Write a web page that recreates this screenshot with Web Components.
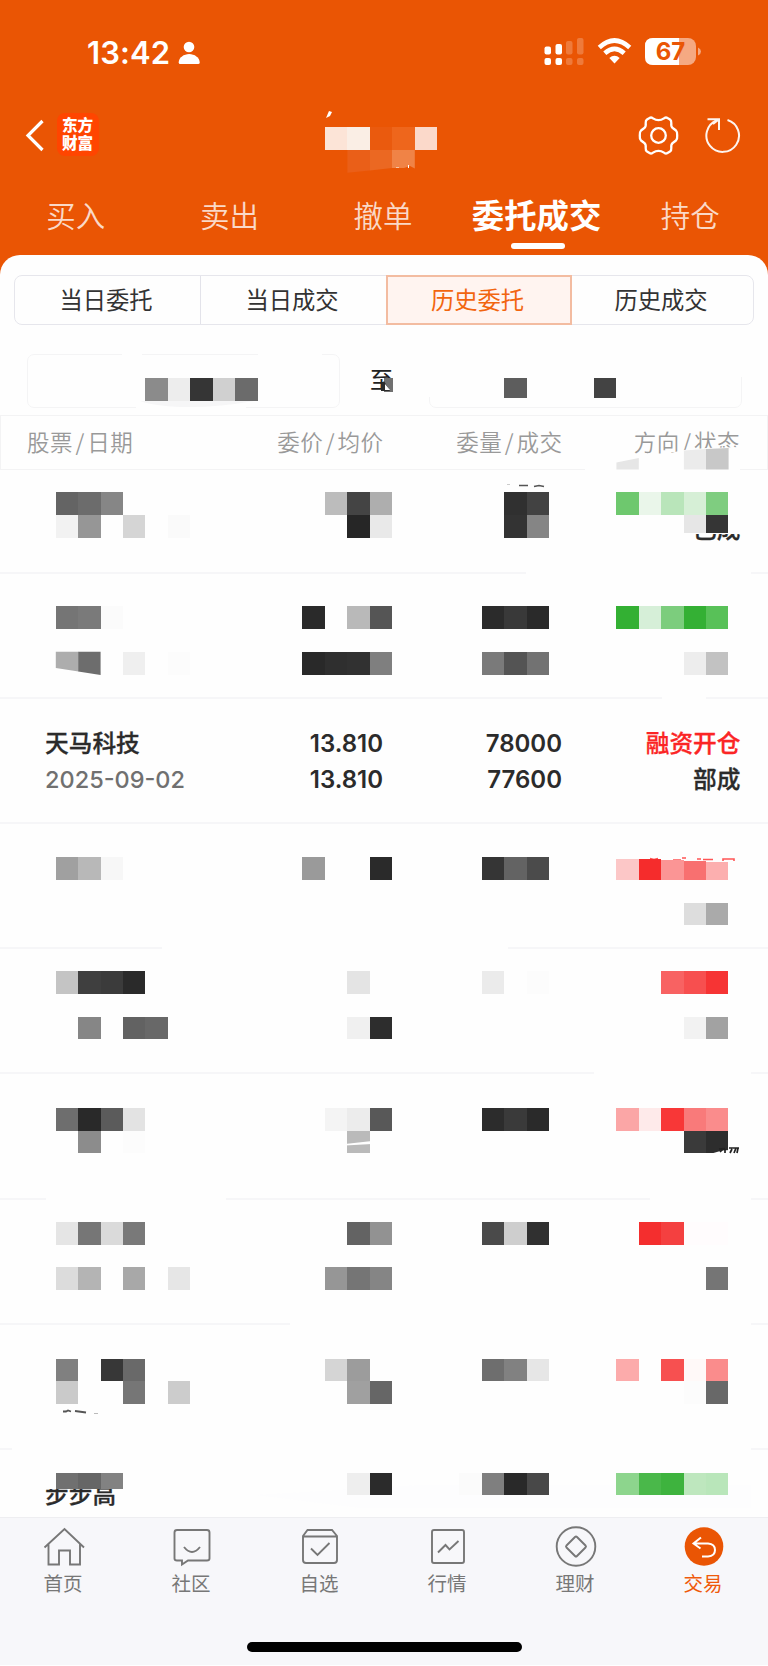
<!DOCTYPE html>
<html lang="zh-CN">
<head>
<meta charset="utf-8">
<title>历史委托</title>
<style>
html,body{margin:0;padding:0;background:#fefefe}
body{width:768px;height:1666px;overflow:hidden;font-family:Inter,"Noto Sans CJK SC",sans-serif}
</style>
</head>
<body>
<trade-app></trade-app>
<script>
const define=(name,html,after)=>customElements.define(name,class extends HTMLElement{
  connectedCallback(){
    if(this.shadowRoot)return;
    this.attachShadow({mode:'open'}).innerHTML=typeof html==='function'?html(this):html;
    if(after)after(this);
  }
});

define('phone-status',`<style>
:host{display:flex;height:104px;color:#fff;padding:0 65px 0 87px;box-sizing:border-box;justify-content:space-between}
.l,.r{display:flex;align-items:flex-start}
.t{font:600 31px/38px Inter,sans-serif;margin-top:34px;letter-spacing:.1px;width:91px;white-space:nowrap}
svg{display:block}
.r svg{margin-top:36px}
.bat{position:relative;margin-left:13px}
.bat b{position:absolute;left:0;top:37px;width:51px;text-align:center;font:700 24px/29px Inter,sans-serif;color:#ea5504}
</style>
<div class="l"><div class="t">13:42</div>
<svg style="margin-top:40px" width="23" height="25" viewBox="0 0 23 25" fill="#fff"><circle cx="11" cy="7" r="5.3"/><path d="M.7 22.5C.7 17.5 6 14 11.200 14s10.500 3.500 10.500 8.500q0 1.500-1.500 1.500H2.200Q.7 24 .7 22.500Z"/></svg></div>
<div class="r">
<svg width="40" height="30" viewBox="0 0 40 30" fill="#fff"><rect x=".5" y="10.500" width="6.500" height="8" rx="2"/><rect x=".5" y="22" width="6.500" height="7" rx="2"/><rect x="11.500" y="8" width="6.500" height="10.500" rx="2"/><rect x="11.500" y="22" width="6.500" height="7" rx="2"/><g opacity=".22"><rect x="22" y="5" width="6.500" height="13.500" rx="2"/><rect x="22" y="22" width="6.500" height="7" rx="2"/><rect x="33" y="2" width="6.500" height="16.500" rx="2"/><rect x="33" y="22" width="6.500" height="7" rx="2"/></g></svg>
<svg style="margin-left:13px" width="35" height="30" viewBox="0 0 35 30" fill="none" stroke="#fff" stroke-width="4.600"><path d="M2.300 11.500Q17.500-2.500 32.700 11.500M7.800 17.200Q17.500 8.500 27.200 17.200"/><path d="M17.500 27.500 12.300 22Q17.500 17.600 22.700 22Z" fill="#fff" stroke="none"/></svg>
<div class="bat"><svg width="58" height="30" viewBox="0 0 58 30"><rect x="0" y="2" width="51" height="27" rx="8" fill="#f5a982"/><path d="M8 2H34V29H8Q0 29 0 21V10Q0 2 8 2Z" fill="#fff"/><path d="M53 11.500Q56 13 56 15.500T53 19.500Z" fill="#f5a982"/></svg><b>67</b></div>
</div>`);

define('nav-header',`<style>
:host{display:flex;height:86px;align-items:flex-start;padding:0 25px;color:#fff;box-sizing:border-box}
.logo{width:42px;height:43px;border-radius:8px;background:#ff4500;margin:9px 0 0 13px;box-sizing:border-box;padding:3px 0 0 5px;white-space:nowrap;font:900 15.600px/17.800px "Noto Sans CJK SC",sans-serif}
.space{flex:1}
svg{display:block}
</style>
<svg style="margin-top:15px" width="19" height="33" viewBox="0 0 19 33" fill="none" stroke="#fff" stroke-width="3.200"><path d="M17.500 2 3 16.500 17.500 31"/></svg>
<div class="logo">东方<br>财富</div><div class="space"></div>
<svg style="margin-top:11px" width="41" height="41" viewBox="-20.500 -20.500 41 41" fill="none" stroke="#fff" stroke-width="2.300" stroke-linejoin="round"><circle r="7.300"/><path d="M-5-16.800Q-7-18.800-9-17.500L-11.500-16Q-13-15-12.800-12.500Q-12.300-8.500-14.500-7.200L-17.500-5Q-19-3.500-18.700 0Q-19 3.500-17.500 5L-14.500 7.200Q-12.300 8.500-12.800 12.500Q-13 15-11.500 16L-9 17.500Q-7 18.800-5 16.800Q-3 15.300 0 15.300Q3 15.300 5 16.800Q7 18.800 9 17.500L11.500 16Q13 15 12.800 12.500Q12.300 8.500 14.500 7.200L17.500 5Q19 3.500 18.700 0Q19-3.500 17.500-5L14.500-7.200Q12.300-8.500 12.800-12.500Q13-15 11.500-16L9-17.500Q7-18.800 5-16.800Q3-15.300 0-15.300Q-3-15.300-5-16.800Z"/></svg>
<svg style="margin:12px 1px 0 26px" width="37" height="39" viewBox="0 0 37 39" fill="none" stroke="#fff" stroke-width="2" opacity=".94"><path d="M22.500 4A16.300 16.300 0 1 1 11.500 4.500M2.500 3.200H14V14M13.500 3.700 8 8"/></svg>`);

define('trade-tab',e=>`<style>
:host{display:flex;flex-direction:column;align-items:center;flex:1;font:350 29.500px/44px "Noto Sans CJK SC",sans-serif;color:rgba(255,255,255,.78);white-space:nowrap}
span{position:relative;left:-1px;top:1.500px}
:host([active]){color:#fff;font-weight:600;font-size:32.400px}
i{display:none;width:54px;height:6px;border-radius:3px;background:#fff;margin-top:9px}
:host([active]) i{display:block}
</style><span><slot></slot></span><i></i>`);

define('seg-item',`<style>
:host{display:flex;align-items:center;justify-content:center;border-right:1.500px solid #e3e3ea;font:400 23.300px/30px "Noto Sans CJK SC",sans-serif;color:#333;box-sizing:border-box;padding:0 3px 2px 0}
:host(:last-child){border-right:0}
:host([active]){background:#fff4f0;color:#f2650f;border:2px solid #f3bca1;margin:-1px 0 -1px -1px}
</style><slot></slot>`);
define('seg-bar',`<style>
:host{display:grid;grid-template-columns:186px 186px 185px 1fr;height:50px;width:740px;margin:20px 0 0 14px;box-sizing:border-box;border:1.500px solid #e6e6ec;border-radius:8px}
</style><slot></slot>`);

define('date-range',`<style>
:host{display:flex;justify-content:space-between;align-items:center;height:55px;margin:28px 26px 0 27px}
i{width:313px;height:54px;box-sizing:border-box;border:1.500px solid #f4f4f5;border-radius:7px}
span{font:400 23px/54px "Noto Sans CJK SC",sans-serif;color:#222;margin:-5px 0 0 -6px}
</style><i></i><span>至</span><i></i>`);

define('list-head',`<style>
:host{display:grid;grid-template-columns:218.500px 138px 179px 177.500px;height:55px;margin-top:7px;box-sizing:border-box;padding-left:26px;border:1.500px solid #f3f3f4;color:#999;font:350 22.500px/50px "Noto Sans CJK SC",sans-serif;letter-spacing:.5px;text-align:right;white-space:nowrap}
b{font-weight:inherit;margin:0 2.500px}
.first{text-align:left}
</style><span class="first">股票<b>/</b>日期</span><span>委价<b>/</b>均价</span><span>委量<b>/</b>成交</span><span>方向<b>/</b>状态</span>`);

define('order-row',`<style>
:host{display:grid;grid-template-columns:200px 138px 179px 178.500px;grid-template-rows:36px 36px;height:125.200px;box-sizing:border-box;padding:27px 0 0 45px;border-bottom:2px solid #f6f6f8;color:#2b2b2b;font:600 24px/36px Inter,"Noto Sans CJK SC",sans-serif;text-align:right;white-space:nowrap}
::slotted([cn]){font:500 23.700px/32.500px "Noto Sans CJK SC",sans-serif;-webkit-text-stroke:.3px currentColor}
::slotted([left]){text-align:left}
::slotted([day]){color:#707070;font-weight:500;font-size:23.500px}
::slotted([buy]){color:#fb2525}
</style><slot></slot>`);

define('redaction-layer',`<style>:host{position:absolute;left:0;top:0;width:768px;height:1517px;pointer-events:none}svg{display:block}rect{shape-rendering:crispEdges}</style><svg width="768" height="1517" viewBox="0 0 768 1517"></svg>`,el=>{
  const X=k=>55.8+22.42*k,Y=j=>492.200+22.800*j;
  const runs=[
   [-5,'4:8b8b8b ededed 353535 d0d0d0 6b6b6b'],
   [0,'0:646464 6c6c6c 868686|12:bcbcbc 444444 aeaeae|20:303030 424242|25:6ec86e eaf6ea b9e5ba d6efd6 7fcd80'],
   [1,'0:f2f2f2 969696|3:d5d5d5|5:fafafa|13:262626 e9e9e9|20:333333 858585'],
   [5,'0:757575 7a7a7a fbfbfb|11:2a2a2a|13:b9b9b9 555555|19:2b2b2b 393939 2a2a2a|25:33b033 d6efd8 7ccd7d 34b034 58c158'],
   [7,'3:efefef|5:fcfcfc|11:292929 2f2f2f 313131 7f7f7f|19:7a7a7a 545454 727272|28:ededed c2c2c2'],
   [16,'0:a0a0a0 b8b8b8 f7f7f7|11:9a9a9a|14:2a2a2a|19:353535 636363 4b4b4b'],
   [18,'28:dddddd aaaaaa'],
   [21,'0:c4c4c4 3f3f3f 3b3b3b 2a2a2a|13:e4e4e4|19:ebebeb|21:fcfcfc|27:f86262 f74f4f f63434'],
   [23,'1:868686|3:626262 686868|13:f0f0f0 2d2d2d|28:f2f2f2 a2a2a2'],
   [27,'0:6e6e6e 292929 5b5b5b e3e3e3|12:f4f4f4 ececec 585858|19:2c2c2c 3a3a3a 2a2a2a|25:fba6a6 feeaea f83737 f97a7a fa8c8c'],
   [28,'1:8c8c8c|3:fcfcfc|13:bababa|28:3a3a3a 2d2d2d'],
   [32,'0:e5e5e5 767676 dadada 797979|13:636363 929292|19:4a4a4a cecece 303030|26:f42e2e f44040 fffcfd fffcfd'],
   [34,'0:dcdcdc b4b4b4|3:a8a8a8|5:e6e6e6|12:969696 757575 858585|29:757575'],
   [38,'0:808080|2:373737 696969|12:d5d5d5 9c9c9c|19:6e6e6e 818181 e6e6e6|25:fcabab|27:f75050 fff9f8 fa8c8c'],
   [39,'0:cacaca|3:767676|5:cccccc|13:a0a0a0 666666|28:fcfcfc 686868'],
   [43,'13:eeeeee 2b2b2b|18:fbfbfb 7f7f7f 292929 484848|25:8dd58d 4ab84a 3eb33e bee7be b9e6ba']];
  const W='#fefefe';
  const rect=(x,y,w,h,c)=>`<rect x="${x}" y="${y}" width="${w}" height="${h}" fill="${c}"/>`;
  const poly=(p,c)=>`<polygon points="${p}" fill="${c}"/>`;
  let s='';
  /* cleared areas */
  s+=rect(122,352,20,4,W)+rect(258,352,64,4,W)+rect(425,350,330,27,W)+rect(425,377,10,20,W)+rect(136,402,110,6,W);
  s+=`<path d="M140 401H254Q220 407 190 407Q158 407 140 401Z" fill="#f6f6f7"/>`;
  s+=poly('670,453 684,450 706,448 740,447 740,470 585,472 585,466 618,462',W);
  s+=rect(690,510,52,23.500,W)+rect(526,571,225,4,W)+rect(662,696,44,4,W)+rect(162,946,346,4,W)+rect(594,1071,157,4,W)+rect(46,1196,180,4,W)+rect(650,1196,101,4,W)+rect(290,1321,461,4,W)+rect(12,1446,739,4,W)+rect(42,1478,80,11,W);
  s+=poly('255,1495 420,1485 751,1485 751,1508 360,1508','#fdfdfe');
  for(const [j,line] of runs)for(const run of line.split('|')){
    const [k,cs]=run.split(':');
    cs.split(' ').forEach((c,i)=>s+=rect(X(+k+i),Y(j),22.420,22.800,'#'+c));
  }
  /* title */
  s+=rect(325,127.200,22.400,23.100,'#fce4d7')+rect(347.400,127.200,22.500,23.100,'#faeee5')+rect(369.900,127.200,22.300,23.100,'#ea5a0e')+rect(392.200,127.200,22.600,23.100,'#ee661c')+rect(414.800,127.200,22.300,23.100,'#fbd9ca');
  s+=poly('347.400,150 370,150 370,170.500 347.400,172.800','#ea5f18')+poly('370,150 392,150 392,168 370,170.500','#eb6822')+poly('392,150 414.800,150 414.800,168.500 410,166 404,168 392,168','#f08346');
  s+=poly('329,111 332,112 330,116 326,118','#fff')+rect(407.500,165,1.500,3,'#fff')+rect(396,167,3,1,'#f8c6a8');
  /* date fields */
  s+=rect(384,378,8.500,14,'#707070')+poly('381,385 384,381 390,391 381,391','#2a2a2a')+poly('385,384 390,390 385,390','#fff')+rect(384,392,12,6,W);
  s+=rect(X(20),378.200,22.420,19.300,'#5d5d5d')+rect(X(24),378.200,22.420,19.300,'#434343');
  /* list header */
  s+=poly('616.400,462.500 638.800,458 638.800,469.500 616.400,469.500','#e6e6e6')+poly('683.900,450.500 706,449 706,469.500 683.900,469.500','#ebebeb')+poly('706,449 728.600,448 728.600,469.500 706,469.500','#c8c8c8');
  /* partly covered cells */
  s+=rect(X(28),Y(1),22.420,18.400,'#e6e6e6')+rect(X(29),Y(1),22.420,18.400,'#353535');
  s+=`<path d="M519 485.500h9M534 486.500l5-1 5 1" stroke="#555" stroke-width="1.600" fill="none"/><path d="M507 484.500h3" stroke="#ccc"/>`;
  s+=poly('55.800,651.800 78.500,651.800 78.500,671.500 55.800,668','#adadad')+poly('78.200,651.800 100.600,651.800 100.600,675 78.200,671.500','#6d6d6d');
  s+=`<path d="M650 858.500l4 1 4-1M673 860h8M682 858h4M697 859h4M703 859.500h10M723 861v-2h11v2" stroke="#f55" stroke-width="1.600" fill="none"/>`;
  s+=rect(X(25),858.500,22.420,21.500,'#fcc7c7')+rect(X(26),858.800,22.420,21.200,'#f52c2c')+rect(X(27),859.500,22.420,20.500,'#fb9595')+rect(X(28),860.500,22.420,19.500,'#f87070')+rect(X(29),861.500,22.420,18.500,'#fcafaf');
  s+=poly('345,1144 372,1141 372,1144 345,1145.500',W);
  s+=poly('710,1154 722,1150.500 730,1150 730,1154',W)+`<path d="M720 1152l3-3M725 1153v-4M730 1153l2-4M734 1153l2-5M719 1149l6-.5M729 1148h10M738 1148l-1 5" stroke="#222" stroke-width="1.700" fill="none"/>`;
  s+=`<path d="M63 1411.500h3l2-1 3 1M75 1411l11 1.500" stroke="#555" stroke-width="1.800" fill="none"/><path d="M94 1413.500h4" stroke="#bbb"/>`;
  s+=rect(X(0),Y(43),22.420,16.200,'#707070')+rect(X(1),Y(43),22.420,16.200,'#666666')+rect(X(2),Y(43),22.420,16.200,'#828282');
  el.shadowRoot.querySelector('svg').innerHTML=s;
});

define('bar-item',`<style>
:host{display:flex;flex-direction:column;align-items:center;width:128px;font:400 19.500px/28px "Noto Sans CJK SC",sans-serif;color:#777}
:host([active]){color:#ef5a0b}
::slotted(svg){display:block;width:42px;height:42px;fill:none;stroke:#777;stroke-width:1.900;margin:8px 0 1px;overflow:visible}
span{margin-left:-2px}
</style><slot name="icon"></slot><span><slot></slot></span>`);
define('tab-bar',`<style>
:host{display:block;height:149px;background:#f7f7fa;box-sizing:border-box;border-top:1.500px solid #eeeef1;border-bottom:1px solid #fff}
nav{display:flex}
i{display:block;width:275px;height:10px;border-radius:5px;background:#000;margin:45px auto 0}
</style><nav><slot></slot></nav><i></i>`);

define('trade-app',`<style>
:host{display:flex;flex-direction:column;position:relative;width:768px;height:1666px;overflow:hidden;background:#fefefe}
.top{background:#ea5504;height:285px;flex:none}
.tabs{display:flex}
main{background:#fefefe;border-radius:20px 20px 0 0;margin-top:-30px;flex:none;height:1262px;overflow:hidden}
.rows{height:1047px;overflow:hidden}
order-row:first-child{margin-top:-21.500px}
</style>
<div class="top"><phone-status></phone-status><nav-header></nav-header>
<div class="tabs"><trade-tab>买入</trade-tab><trade-tab>卖出</trade-tab><trade-tab>撤单</trade-tab><trade-tab active>委托成交</trade-tab><trade-tab>持仓</trade-tab></div></div>
<main>
<seg-bar><seg-item>当日委托</seg-item><seg-item>当日成交</seg-item><seg-item active>历史委托</seg-item><seg-item>历史成交</seg-item></seg-bar>
<date-range></date-range><list-head></list-head>
<div class="rows">
<order-row><span></span><span></span><span></span><span></span><span></span><span></span><span></span><span cn>已成</span></order-row>
<order-row></order-row>
<order-row><span cn left>天马科技</span><span>13.810</span><span>78000</span><span cn buy>融资开仓</span><span left day>2025-09-02</span><span>13.810</span><span>77600</span><span cn>部成</span></order-row>
<order-row></order-row><order-row></order-row><order-row></order-row><order-row></order-row><order-row></order-row>
<order-row><span cn left>步步高</span></order-row>
</div></main>
<tab-bar>
<bar-item><svg slot="icon" viewBox="0 0 42 42"><path d="M1.500 21.500 21.500 3 41 21.500M5.500 18V38.500H16V24.500H27V38.500H37V18"/></svg>首页</bar-item>
<bar-item><svg slot="icon" viewBox="0 0 42 42"><path d="M6 4H36Q38.500 4 38.500 6.500V32.500Q38.500 34.500 36 34.500H17L11 38.500V34.500H6Q3.500 34.500 3.500 32.500V6.500Q3.500 4 6 4ZM13 21Q21 31 29 21"/></svg>社区</bar-item>
<bar-item><svg slot="icon" viewBox="0 0 42 42"><path d="M8.500 4H33L38 10V34Q38 37 35 37H7Q4 37 4 34V10ZM4 10.500H38M12 22.500 18.500 29 30.500 17"/></svg>自选</bar-item>
<bar-item><svg slot="icon" viewBox="0 0 42 42"><rect x="5" y="4" width="32" height="33" rx="2"/><path d="M11 26.500 18.500 19 22.500 23.500 31.500 15"/></svg>行情</bar-item>
<bar-item><svg slot="icon" viewBox="0 0 42 42"><circle cx="21" cy="20.500" r="19.300"/><path d="M20 11Q21 10 22 11L30.500 19.500Q31.500 20.500 30.500 21.500L22 30Q21 31 20 30L11.500 21.500Q10.500 20.500 11.500 19.500Z"/></svg>理财</bar-item>
<bar-item active><svg slot="icon" viewBox="0 0 42 42"><circle cx="21" cy="20.500" r="19.300" fill="#ea5504" stroke="none"/><path d="M18 11.500 10.500 17.500 17.500 22.500M10.500 17.500H25Q32 18 32 24Q32 30 25 30.500H19" stroke="#fff" stroke-width="2"/></svg>交易</bar-item>
</tab-bar>
<redaction-layer></redaction-layer>`);
</script>
</body>
</html>
